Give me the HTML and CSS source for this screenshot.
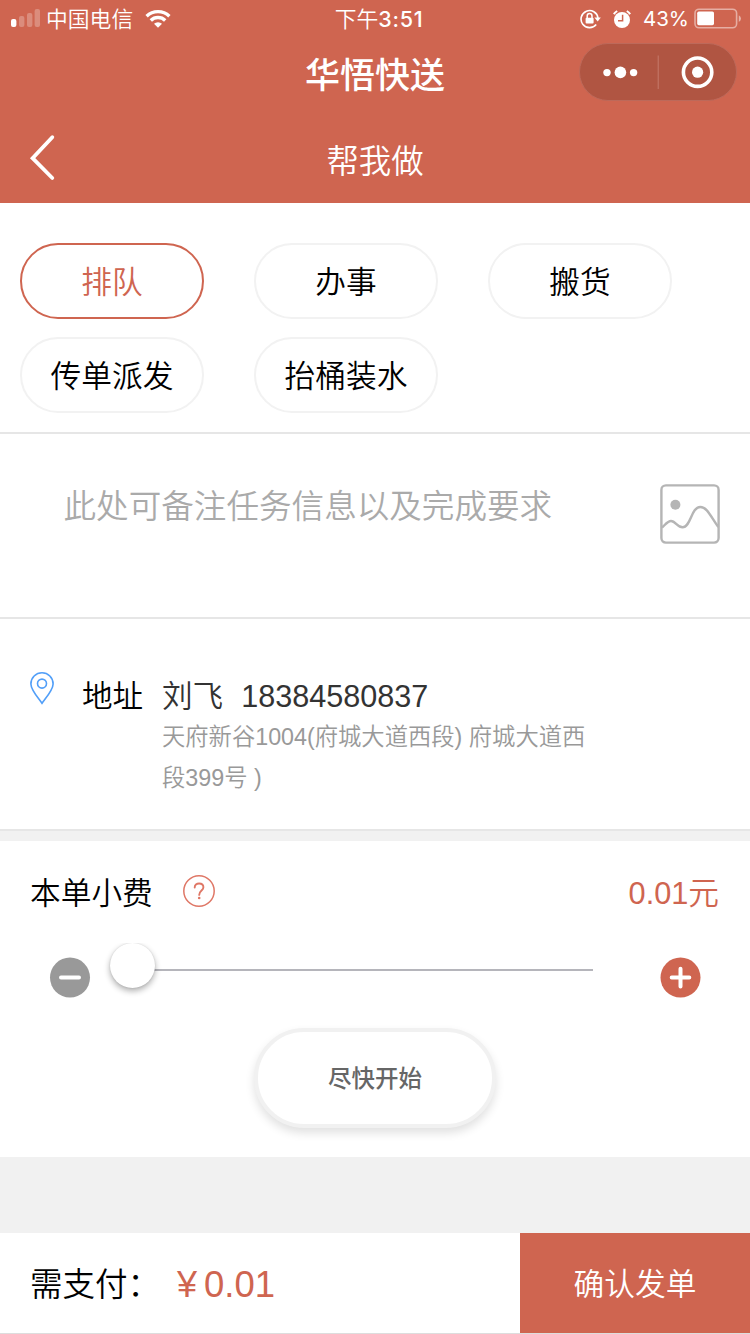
FILE: index.html
```html
<!DOCTYPE html>
<html lang="zh-CN">
<head>
<meta charset="utf-8">
<title>华悟快送</title>
<link rel="stylesheet" href="styles.css">
</head>
<body>
<div class="app">
  <header class="header">
    <div class="status">
      <div class="status-left">
        <svg class="signal" width="30" height="20" viewBox="0 0 30 20" fill="#fff"><rect x="1" y="10" width="5.4" height="8" rx="2"/><g opacity=".25"><rect x="9" y="7" width="5.4" height="11" rx="2"/><rect x="17" y="4" width="5.4" height="14" rx="2"/><rect x="24.6" y="0" width="5.4" height="18" rx="2"/></g></svg>
        <span class="carrier">中国电信</span>
        <svg class="wifi" width="26" height="20" viewBox="0 0 26 20" fill="none" stroke="#fff" stroke-width="3.4"><path d="M1.6 7.2A16.5 16.5 0 0 1 24.4 7.2"/><path d="M5.8 11.4A10.4 10.4 0 0 1 20.2 11.4"/><path d="M9 14.8A5.8 5.8 0 0 1 17 14.8L13 18.8Z" fill="#fff" stroke="none"/></svg>
      </div>
      <div class="clock">下午<b>3:51</b></div>
      <div class="status-right">
        <svg width="22" height="20" viewBox="0 0 22 20" fill="none" stroke="#fff" stroke-width="1.6"><path d="M16.2 15.4A8.5 8.5 0 1 1 18 9"/><path d="M14.4 8.6h6.4L17.7 12.6z" fill="#fff" stroke="none"/><rect x="5.6" y="8.8" width="8" height="5.8" rx="1" fill="#fff" stroke="none"/><path d="M7.2 9V7a2.4 2.4 0 0 1 4.8 0v2" stroke-width="1.5"/></svg>
        <svg class="alarm" width="18" height="19" viewBox="0 0 18 19"><circle cx="9" cy="10" r="8" fill="#fff"/><path d="M.8 4.2A13 13 0 0 1 4.2 1M17.2 4.2A13 13 0 0 0 13.8 1" stroke="#fff" stroke-width="2" fill="none"/><path d="M9.6 4.8v6H5" stroke="#cf6550" stroke-width="1.5" fill="none"/></svg>
        <span class="percent">43%</span>
        <svg class="battery" width="48" height="22" viewBox="0 0 48 22"><rect x="1" y="1.2" width="41.6" height="18.6" rx="4" fill="none" stroke="#fff" stroke-opacity=".48" stroke-width="1.6"/><rect x="3.2" y="3.6" width="16.8" height="13.6" rx="1.6" fill="#fff"/><path d="M44.8 7.2q2.2 1.2 2.2 3.4t-2.2 3.4z" fill="#fff" fill-opacity=".5"/></svg>
      </div>
    </div>
    <div class="titlebar">
      <h1 class="app-title">华悟快送</h1>
      <div class="capsule">
        <svg width="156" height="56" viewBox="0 0 156 56"><g fill="#fff"><circle cx="27" cy="28.6" r="3.7"/><circle cx="40.4" cy="28.4" r="5.8"/><circle cx="53.6" cy="28.6" r="3.7"/><circle cx="117.6" cy="28.2" r="5.6"/></g><circle cx="117.6" cy="28.2" r="14.2" fill="none" stroke="#fff" stroke-width="3.6"/><path d="M78.2 11.5v33.5" stroke="#c57a6c" stroke-width="1"/></svg>
      </div>
    </div>
    <div class="navbar">
      <svg class="back" width="28" height="48" viewBox="0 0 28 48" fill="none" stroke="#fff" stroke-width="3.8" stroke-linecap="round" stroke-linejoin="miter"><path d="M24.3 3.2L4.6 24.1 24.3 44"/></svg>
      <h2 class="page-title">帮我做</h2>
    </div>
  </header>

  <section class="chips">
    <div class="chip active">排队</div>
    <div class="chip">办事</div>
    <div class="chip">搬货</div>
    <div class="chip">传单派发</div>
    <div class="chip">抬桶装水</div>
  </section>

  <section class="note">
    <div class="placeholder">此处可备注任务信息以及完成要求</div>
    <svg width="60" height="60" viewBox="0 0 60 60" fill="none" stroke="#b5b5b5" stroke-width="2.4"><rect x="1.4" y="1.4" width="57.2" height="57.2" rx="4.5"/><circle cx="15.4" cy="20.8" r="5" fill="#b5b5b5" stroke="none"/><path d="M2 43.6C5 41 7.500 37 11 37C15.500 37 17.500 43.300 22.500 43.300C31 43.300 31 23 40.300 23C47.500 23 51 33.500 58.300 43"/></svg>
  </section>

  <section class="address">
    <svg width="24" height="33" viewBox="0 0 24 33" fill="none" stroke="#529ff8" stroke-width="1.6"><path d="M12 31.3C9 26.800 .9 18 .9 11.900A11.1 11.1 0 0 1 23.100 11.900C23.100 18 15 26.800 12 31.300Z"/><circle cx="12" cy="11.600" r="4.500"/></svg>
    <div class="address-label">地址</div>
    <div class="address-body">
      <div class="contact"><span>刘飞</span><span>18384580837</span></div>
      <div class="detail">天府新谷1004(府城大道西段) 府城大道西<br>段399号 )</div>
    </div>
  </section>

  <section class="tip">
    <div class="tip-head">
      <span class="tip-label">本单小费</span>
      <svg class="help" width="32" height="32" viewBox="0 0 32 32" fill="none" stroke="#df7766"><circle cx="16" cy="16" r="15.200" stroke-width="1.5"/><path d="M11.700 12.500C11.700 9.900 13.600 8.500 16.100 8.500C18.700 8.500 20.400 10 20.400 12.300C20.400 15.500 16.200 15.500 16.200 19.900" stroke-width="1.900" stroke-linecap="round"/><circle cx="16.200" cy="23" r="1.300" fill="#df7766" stroke="none"/></svg>
      <span class="tip-amount">0.01元</span>
    </div>
    <div class="slider-row">
      <svg class="step" width="40" height="40" viewBox="0 0 40 40"><circle cx="20" cy="19.600" r="20" fill="#999"/><path d="M11 19.600h18" stroke="#fff" stroke-width="4" stroke-linecap="round"/></svg>
      <div class="slider"><div class="track"></div><div class="thumb"></div></div>
      <svg class="step" width="40" height="40" viewBox="0 0 40 40"><circle cx="20.500" cy="19.600" r="20" fill="#cf6550"/><path d="M11.700 19.600h17.600M20.500 10.800v17.600" stroke="#fff" stroke-width="4" stroke-linecap="round"/></svg>
    </div>
    <div class="start">尽快开始</div>
  </section>

  <footer class="footer">
    <div class="pay"><span class="pay-label">需支付：</span><span class="yen">¥</span><span class="pay-amount">0.01</span></div>
    <div class="confirm">确认发单</div>
  </footer>
</div>
</body>
</html>
```

FILE: styles.css
```css
* { box-sizing: border-box; }
body {
  margin: 0;
  background: #f1f1f1;
  color: #000;
  font-family: "Liberation Sans", "Noto Sans CJK SC", sans-serif;
  font-weight: 350;
}
svg { display: block; flex: none; }
h1, h2 { margin: 0; }
.app {
  width: 750px;
  height: 1334px;
  display: flex;
  flex-direction: column;
  overflow: hidden;
}

.header { height: 203px; background: #cf6550; color: #fff; flex: none; }
.status {
  height: 38px;
  display: grid;
  grid-template-columns: minmax(0, 1fr) auto minmax(0, 1fr);
  align-items: center;
  padding: 0 9px 0 10px;
  font-size: 21.8px;
  line-height: 34px;
}
.status-left, .status-right { display: flex; align-items: center; }
.carrier { margin-left: 6px; }
.wifi { margin-left: 12px; }
.clock { padding: 0 0 0 7px; }
.clock b { font-family: Inter, sans-serif; font-weight: 500; font-size: 21.500px; letter-spacing: .7px; }
.status-right { justify-content: flex-end; }
.status-left, .clock, .status-right { height: 38px; }
.clock { line-height: 38px; }
.carrier { padding-top: 1px; }
.alarm { margin-left: 11px; }
.percent { margin-left: 12px; font-family: Inter, sans-serif; font-size: 20.500px; font-weight: 400; }
.battery { margin: -1px -1px 0 5px; }

.titlebar {
  height: 75px;
  display: grid;
  grid-template-columns: minmax(0, 1fr) auto minmax(0, 1fr);
  padding: 5px 0 0;
}
.app-title { grid-column: 2; font-size: 35px; line-height: 66px; font-weight: 500; }
.capsule {
  justify-self: end;
  margin-right: 13px;
  width: 158px;
  height: 58px;
  border: 1px solid #bd695a;
  border-radius: 29px;
  background: #b05542;
}
.navbar {
  height: 90px;
  display: grid;
  grid-template-columns: minmax(0, 1fr) auto minmax(0, 1fr);
}
.back { margin: 21px 0 0 28px; }
.page-title { font-size: 32.400px; line-height: 98px; font-weight: 350; }

.chips {
  height: 231px;
  flex: none;
  display: grid;
  grid-template-columns: repeat(3, 184px);
  grid-auto-rows: 76px;
  gap: 18px 50px;
  padding: 40px 20px 0;
  background: #fff;
  border-bottom: 2px solid #e6e6e6;
}
.chip {
  border: 2px solid #f2f2f2;
  border-radius: 38px;
  font-size: 30.700px;
  line-height: 76px;
  text-align: center;
}
.chip.active { border-color: #cf6550; color: #cf6550; }

.note {
  height: 185px;
  flex: none;
  display: flex;
  justify-content: space-between;
  padding: 50px 30px 0 63.500px;
  background: #fff;
  border-bottom: 2px solid #e6e6e6;
}
.placeholder { font-size: 32.600px; line-height: 46px; color: #aaa; }

.address {
  height: 212px;
  flex: none;
  display: flex;
  padding: 53px 30px 0;
  background: #fff;
  border-bottom: 2px solid #e6e6e6;
}
.address-label { margin-left: 28px; width: 80px; font-size: 30.600px; line-height: 48px; }
.contact { display: flex; gap: 18px; font-size: 30.600px; line-height: 48px; color: #333; }
.detail { font-size: 23.300px; line-height: 41px; color: #999; white-space: nowrap; margin-top: -3px; }

.tip {
  height: 316px;
  flex: none;
  margin-top: 10px;
  background: #fff;
}
.tip-head { height: 102px; display: flex; align-items: flex-start; padding: 0 31px 0 30px; line-height: 105px; }
.tip-label { width: 153px; font-size: 30.700px; }
.help { margin-top: 34px; }
.tip-amount { margin-left: auto; font-size: 30.700px; color: #cf6550; }
.slider-row { height: 70px; display: flex; padding: 0 50px; }
.step { margin-top: 15px; overflow: visible; }
.slider {
  position: relative;
  width: 510px;
  height: 60px;
  margin-right: 60px;
  overflow: hidden;
}
.track { width: 449px; height: 2px; margin: 26px 0 0 54px; background: #b5b5bb; }
.thumb {
  position: absolute;
  left: 20px;
  top: 0;
  width: 45px;
  height: 45px;
  border-radius: 50%;
  background: #fff;
  box-shadow: 0 3px 6px rgba(0, 0, 0, .32), 0 0 2px rgba(0, 0, 0, .12);
}
.start {
  width: 242px;
  height: 100px;
  margin: 15px auto 0;
  border: 4px solid #f1f1f1;
  border-radius: 50px;
  background: #fff;
  box-shadow: 0 5px 10px rgba(0, 0, 0, .12);
  color: #666;
  font-size: 23.500px;
  line-height: 95px;
  font-weight: 500;
  text-align: center;
}

.footer { height: 101px; margin-top: 76px; flex: none; display: flex; border-bottom: 1px solid #ddd; background: #fff; }
.pay { width: 520px; display: flex; padding-left: 30px; line-height: 104px; }
.pay-label { width: 147px; font-size: 32.500px; }
.yen { width: 27px; font-size: 36px; color: #cf6550; }
.pay-amount { font-size: 36.500px; color: #cf6550; }
.confirm { width: 230px; background: #cf6550; color: #fff; font-size: 30.700px; line-height: 103px; text-align: center; }
```
